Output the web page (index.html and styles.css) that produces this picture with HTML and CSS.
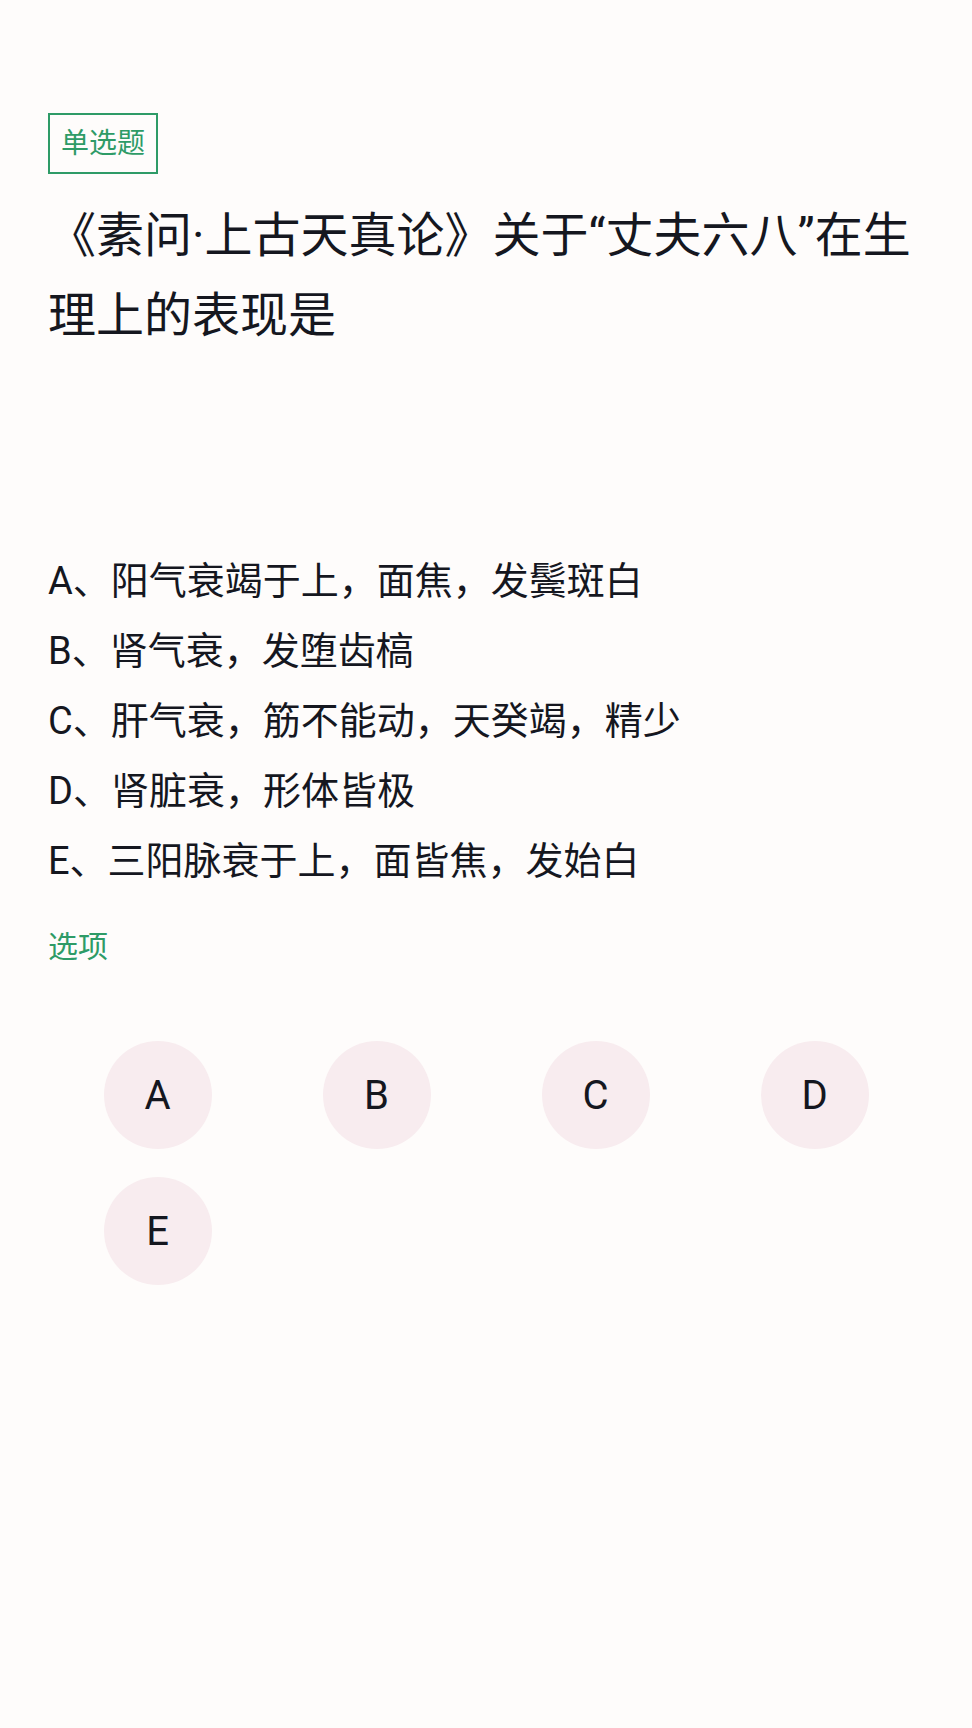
FILE: index.html
```html
<!DOCTYPE html>
<html lang="zh-CN">
<head>
  <meta charset="UTF-8">
  <meta name="viewport" content="width=device-width, initial-scale=1">
  <title>单选题</title>
  <link rel="stylesheet" href="styles.css">
</head>
<body>
  <div class="page">
    <span class="tag">单选题</span>
    <h1 class="question">《素问·上古天真论》关于“丈夫六八”在生理上的表现是</h1>

    <div class="options">
      <p>A、阳气衰竭于上，面焦，发鬓斑白</p>
      <p>B、肾气衰，发堕齿槁</p>
      <p>C、肝气衰，筋不能动，天癸竭，精少</p>
      <p>D、肾脏衰，形体皆极</p>
      <p>E、三阳脉衰于上，面皆焦，发始白</p>
    </div>

    <div class="label">选项</div>

    <div class="choices">
      <div class="choice"><span>A</span></div>
      <div class="choice"><span>B</span></div>
      <div class="choice"><span>C</span></div>
      <div class="choice"><span>D</span></div>
      <div class="choice"><span>E</span></div>
    </div>
  </div>
</body>
</html>
```

FILE: styles.css
```css
* { box-sizing: border-box; }
body {
  margin: 0;
  background: #fefcfb;
  color: #15171f;
  font-family: Roboto, "Noto Sans CJK SC", sans-serif;
}
.page {
  padding: 113px 48px 0 48px;
}
.tag {
  display: inline-block;
  height: 61px;
  line-height: 57px;
  padding: 0 11px;
  border: 2px solid #2e9b67;
  color: #2e9b67;
  font-size: 28px;
}
.question {
  margin: 22px 0 0 0;
  font-size: 48px;
  line-height: 80px;
  font-weight: normal;
}
.options {
  margin-top: 190px;
}
.options p {
  margin: 0;
  font-size: 38px;
  line-height: 70px;
}
.label {
  margin-top: 31px;
  font-size: 30px;
  line-height: 40px;
  color: #2e9b67;
}
.choices {
  margin-top: 74px;
  display: grid;
  grid-template-columns: repeat(4, 1fr);
  row-gap: 28px;
}
.choice {
  display: flex;
  justify-content: center;
}
.choice span {
  width: 108px;
  height: 108px;
  border-radius: 50%;
  background: #f8ecef;
  display: flex;
  align-items: center;
  justify-content: center;
  font-size: 40px;
}
```
